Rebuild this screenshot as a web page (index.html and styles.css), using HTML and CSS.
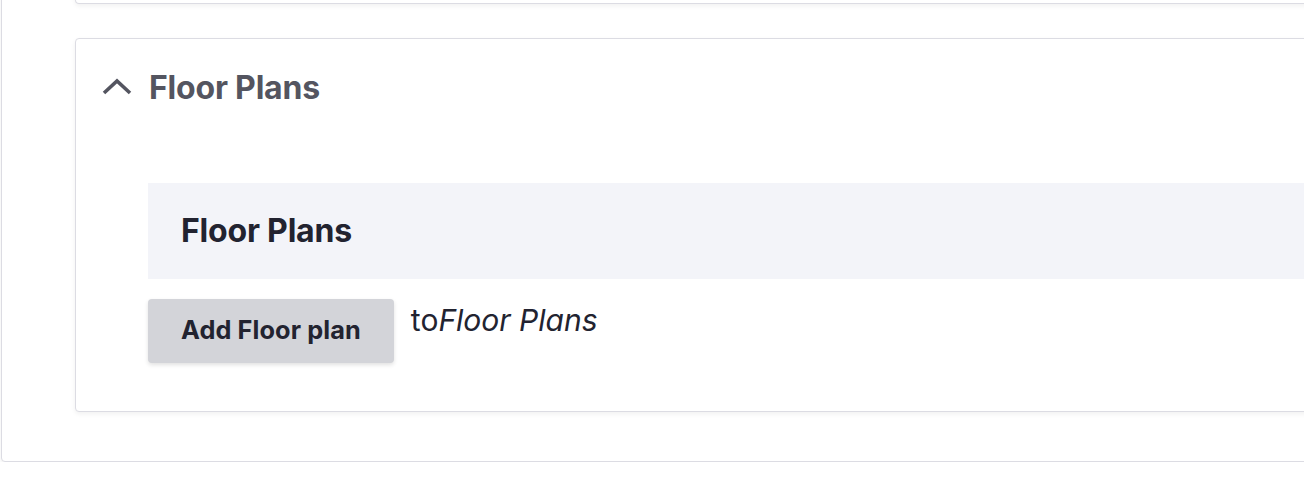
FILE: index.html
```html
<!DOCTYPE html>
<html>
<head>
  <title>Floor Plans</title>
  <link rel="stylesheet" href="styles.css">
</head>
<body>
  <div class="outer-card">
    <div class="prev-card"></div>

    <div class="details">
      <div class="summary">
        <svg class="chevron" width="30" height="18" viewBox="0 0 30 18">
          <polyline points="2,15 15,3 28,15" fill="none" stroke="#545560" stroke-width="3.6" stroke-linecap="butt" stroke-linejoin="miter"/>
        </svg>
        <span class="summary-title">Floor Plans</span>
      </div>

      <div class="details-body">
        <div class="fieldset-head">Floor Plans</div>
        <div class="add-row">
          <button class="add-button">Add Floor plan</button>
          <span class="add-target">to<em>Floor Plans</em></span>
        </div>
      </div>
    </div>
  </div>
</body>
</html>
```

FILE: styles.css
```css
body {
  margin: 0;
  overflow: hidden;
  background: #fff;
  font-family: Inter, "Noto Sans", "Liberation Sans", sans-serif;
  color: #222330;
}

.outer-card {
  width: 1500px;
  margin: -40px 0 0 1px;
  padding: 0 0 49px 73px;
  border: 1px solid #dcdce3;
  border-radius: 4px;
  box-shadow: 0 2px 5px rgba(0, 0, 0, 0.06);
  background: #fff;
}

.prev-card {
  height: 42px;
  border: 1px solid #dcdce3;
  border-top: none;
  border-radius: 0 0 4px 4px;
  box-shadow: 0 2px 5px rgba(0, 0, 0, 0.06);
}

.details {
  margin-top: 34px;
  border: 1px solid #dcdce3;
  border-radius: 4px;
  box-shadow: 0 2px 5px rgba(0, 0, 0, 0.06);
  background: #fff;
}

.summary {
  display: flex;
  align-items: center;
  padding: 28px 26px;
  height: 40px;
}

.chevron {
  display: block;
  margin-right: 17px;
}

.summary-title {
  font-size: 32px;
  font-weight: 700;
  color: #545560;
  letter-spacing: -0.2px;
}

.details-body {
  padding: 48px 0 48px 72px;
}

.fieldset-head {
  background: #f3f4f9;
  height: 96px;
  line-height: 96px;
  padding: 0 33px;
  font-size: 32px;
  font-weight: 700;
  color: #222330;
  letter-spacing: -0.2px;
}

.add-row {
  display: flex;
  align-items: flex-start;
  margin-top: 20px;
}

.add-button {
  height: 64px;
  padding: 0 33px 3px;
  border: none;
  border-radius: 4px;
  background: #d3d4d9;
  box-shadow: 0 2px 4px rgba(0, 0, 0, 0.12);
  font-family: inherit;
  font-size: 25.3px;
  font-weight: 700;
  color: #222330;
  letter-spacing: 0.1px;
}

.add-target {
  margin-left: 17px;
  font-size: 30px;
  line-height: 42px;
  color: #222330;
}

.add-target em {
  font-style: italic;
}
```
